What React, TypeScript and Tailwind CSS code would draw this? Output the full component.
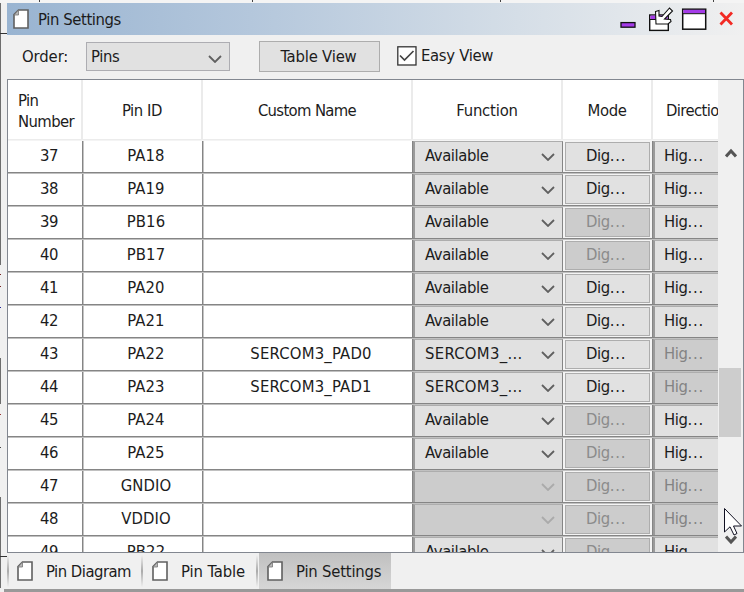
import React from 'react';

type Row = { n: number; id: string; name?: string; fn: string; mode: boolean; dir: boolean };

const rows: Row[] = [
  { n: 37, id: 'PA18', fn: 'Available', mode: true, dir: true },
  { n: 38, id: 'PA19', fn: 'Available', mode: true, dir: true },
  { n: 39, id: 'PB16', fn: 'Available', mode: false, dir: true },
  { n: 40, id: 'PB17', fn: 'Available', mode: false, dir: true },
  { n: 41, id: 'PA20', fn: 'Available', mode: true, dir: true },
  { n: 42, id: 'PA21', fn: 'Available', mode: true, dir: true },
  { n: 43, id: 'PA22', name: 'SERCOM3_PAD0', fn: 'SERCOM3_...', mode: true, dir: false },
  { n: 44, id: 'PA23', name: 'SERCOM3_PAD1', fn: 'SERCOM3_...', mode: true, dir: false },
  { n: 45, id: 'PA24', fn: 'Available', mode: false, dir: true },
  { n: 46, id: 'PA25', fn: 'Available', mode: false, dir: true },
  { n: 47, id: 'GNDIO', fn: '', mode: false, dir: false },
  { n: 48, id: 'VDDIO', fn: '', mode: false, dir: false },
  { n: 49, id: 'PB22', fn: 'Available', mode: false, dir: true },
];

const COLS = 'grid grid-cols-[75px_120px_210px_150px_90px_65px]';

function PageIcon() {
  return (
    <svg width="16" height="20" viewBox="0 0 16 20" className="shrink-0">
      <path d="M5.5 1H15V19H1V5.5Z" fill="#fff" stroke="#606060" strokeWidth="1.6" />
      <path d="M1 6L5.5 1V6Z" fill="#b8b8b8" stroke="#777" strokeWidth="0.8" />
    </svg>
  );
}

function Chevron({ color = '#606060' }: { color?: string }) {
  return (
    <svg width="14" height="8" viewBox="0 0 14 8" className="shrink-0">
      <path d="M1 1L7 7L13 1" fill="none" stroke={color} strokeWidth="1.8" />
    </svg>
  );
}

function TitleBar() {
  return (
    <div className="flex h-8 shrink-0 items-center bg-[linear-gradient(90deg,#99b4d1_0%,#b4c7dc_33%,#d2dce6_66%,#f0f0f0_100%)] pl-[6px]">
      <PageIcon />
      <span className="mt-px ml-[9px] whitespace-nowrap">Pin Settings</span>
      <svg width="124" height="32" viewBox="620 3 124 32" className="ml-auto">
        <rect x="621" y="22.6" width="14" height="4.6" fill="#a43be8" stroke="#111" strokeWidth="1.3" />
        <rect x="649.7" y="15" width="18.6" height="15.4" fill="#fff" stroke="#111" strokeWidth="1.4" />
        <rect x="650.4" y="15.6" width="17.2" height="3.6" fill="#a43be8" />
        <path d="M650 19.5H668" stroke="#111" strokeWidth="1" />
        <path d="M655.5 11.5L659 10.5V16L662 16.5L669.5 8L672.5 11L664.5 19L670.5 19.5L671 21.5L668 24H656Z" fill="#fff" stroke="#111" strokeWidth="1.1" />
        <rect x="682.7" y="9.2" width="23" height="20" fill="#fff" stroke="#111" strokeWidth="1.5" />
        <rect x="683.4" y="9.8" width="21.6" height="3.6" fill="#a43be8" />
        <path d="M683 13.7H705.5" stroke="#111" strokeWidth="1" />
        <path d="M720.5 12.5L732 24.5M732 12.5L720.5 24.5" stroke="#f22a24" strokeWidth="2.8" />
      </svg>
    </div>
  );
}

function Toolbar() {
  return (
    <div className="flex h-11 shrink-0 items-start pl-[15px]">
      <span className="mt-3 w-[64px] leading-5 tracking-[-0.1px]">Order:</span>
      <div className="mt-[7px] flex h-[29px] w-[144px] items-center justify-between border border-[#adadb2] bg-[#e1e1e1] pr-[7px] pl-1">
        <span>Pins</span>
        <span className="mt-[5px] flex"><Chevron /></span>
      </div>
      <div className="mt-[6px] ml-[29px] flex h-[31px] w-[121px] items-center justify-center border border-[#adadad] bg-[#e1e1e1] pr-[2px] tracking-[-0.2px]">
        Table View
      </div>
      <svg width="20" height="20" viewBox="0 0 20 20" className="mt-[11px] ml-[17px]">
        <rect x="0.8" y="0.8" width="18.2" height="18.2" fill="#fff" stroke="#333" strokeWidth="1.3" />
        <path d="M3 9.5L7.5 14L16.5 5" fill="none" stroke="#444" strokeWidth="1.7" />
      </svg>
      <span className="mt-[11px] ml-1 leading-5 tracking-[-0.3px]">Easy View</span>
    </div>
  );
}

function Header() {
  const cell = 'flex items-center justify-center border-r-2 border-[#ebebeb] pt-[2px] whitespace-nowrap';
  return (
    <div className={`${COLS} h-[60px] w-[710px] shrink-0 overflow-hidden border-b border-[#ececec] bg-white`}>
      <div className="flex items-center border-r-2 border-[#ebebeb] pt-[2px] pl-[10px] leading-[21px] tracking-[-0.6px]">Pin<br />Number</div>
      <div className={cell}>Pin ID</div>
      <div className={`${cell} tracking-[-0.65px]`}>Custom Name</div>
      <div className={`${cell} tracking-[-0.2px]`}>Function</div>
      <div className={cell}>Mode</div>
      <div className="flex items-center overflow-hidden pt-[2px] pl-[13px] tracking-[-0.6px] whitespace-nowrap">Direction</div>
    </div>
  );
}

function TableRow({ r, first }: { r: Row; first: boolean }) {
  const plain = 'flex items-center justify-center border-r border-[#858585] border-l border-l-[#c4c4c4] bg-white pb-[2px]';
  return (
    <div className={`${COLS} h-[33px] w-[710px] shrink-0 overflow-hidden border-t border-b border-b-[#858585] ${first ? 'border-t-[#f4f4f4]' : 'border-t-[#c0c0c0]'}`}>
      <div className="flex items-center justify-center border-r border-[#858585] bg-white pb-[2px] pl-2">{r.n}</div>
      <div className={`${plain} pl-[6px] tracking-[0.1px]`}>{r.id}</div>
      <div className={`${plain} pl-[6px] tracking-[0.2px]`}>{r.name}</div>
      <div className={`flex items-center justify-between border-t border-r border-l-2 border-t-[#adadad] border-r-[#858585] border-l-[#9a9a9a] pr-[7px] pb-[2px] pl-[10px] ${r.fn ? 'bg-[#e1e1e1]' : 'bg-[#cccccc]'}`}>
        <span className={r.fn === 'Available' ? '' : 'tracking-[0.3px]'}>{r.fn}</span>
        <span className="mt-[2px] flex"><Chevron color={r.fn ? '#606060' : '#aaaaaa'} /></span>
      </div>
      <div className="flex border-r border-[#858585] bg-[#f4f4f4] pt-px pr-[2px] pb-px pl-[2px]">
        <div className={`flex flex-1 items-center border border-[#adadad] pb-[2px] pl-5 ${r.mode ? 'bg-[#e1e1e1]' : 'bg-[#cccccc] text-[#8b8b8b]'}`}><span>Dig<span className="tracking-[0.8px]">...</span></span></div>
      </div>
      <div className={`flex items-center overflow-hidden border-t border-l-2 border-t-[#adadad] border-l-[#9a9a9a] pb-[2px] pl-[9px] ${r.dir ? 'bg-[#e1e1e1]' : 'bg-[#cccccc] text-[#838383]'}`}><span>Hig<span className="tracking-[0.8px]">...</span></span></div>
    </div>
  );
}

function ScrollBar() {
  return (
    <div className="flex flex-1 flex-col items-center bg-[#f0f0f0]">
      <svg width="12" height="11" viewBox="0 0 12 11" className="mt-[68px] shrink-0">
        <path d="M1 8.5L6 3L11 8.5" fill="none" stroke="#555" strokeWidth="3" />
      </svg>
      <div className="mt-[209px] mr-px h-[69px] w-[22px] shrink-0 bg-[#cdcdcd]" />
      <svg width="12" height="11" viewBox="0 0 12 11" className="mt-[97px] shrink-0">
        <path d="M1 2.5L6 8L11 2.5" fill="none" stroke="#555" strokeWidth="3" />
      </svg>
    </div>
  );
}

function Divider() {
  return <div className="h-8 w-[2px] shrink-0 bg-[linear-gradient(180deg,#f0f0f0,#aaaaaa_50%,#f0f0f0)]" />;
}

function Tabs() {
  return (
    <div className="flex h-9 shrink-0 items-center whitespace-nowrap">
      <Divider />
      <div className="flex w-[132px] items-center pl-2"><PageIcon /><span className="mt-px ml-[13px] tracking-[-0.5px]">Pin Diagram</span></div>
      <Divider />
      <div className="flex w-[113px] items-center pl-[9px]"><PageIcon /><span className="mt-px ml-[13px] tracking-[-0.1px]">Pin Table</span></div>
      <Divider />
      <div className="ml-px flex h-full w-[132px] items-center bg-[linear-gradient(180deg,#c0c0c0,#d6d6d6)] pl-2"><PageIcon /><span className="mt-px ml-[13px] tracking-[-0.2px]">Pin Settings</span></div>
    </div>
  );
}

export default function App() {
  return (
    <div className="relative flex h-[592px] w-[744px] flex-col overflow-hidden bg-[#f0f0f0] font-['DejaVu_Sans_Condensed','DejaVu_Sans',sans-serif] text-[16.5px] leading-5 tracking-[-0.4px] text-[#1c1c1c] [font-stretch:condensed]">
      <div className="flex h-[3px] shrink-0 bg-[#f4f4f4] pl-[39px]">
        <div className="h-[2px] w-px bg-[#444]" />
        <div className="ml-[212px] h-[2px] w-px bg-[#444]" />
        <div className="ml-[247px] h-[2px] w-px bg-[#444]" />
        <div className="ml-[212px] h-[2px] w-px bg-[#444]" />
      </div>
      <div className="flex h-[586px] shrink-0">
        <div className="flex w-[7px] shrink-0 flex-col">
          <div className="h-[30px] w-px bg-[#6d6d6d]" />
          <div className="h-px w-[7px] bg-[#333]" />
          <div className="h-[231px] w-px bg-[#6d6d6d]" />
          <div className="mt-[9px] h-px w-px bg-[#722]" />
          <div className="mt-[11px] h-px w-px bg-[#722]" />
          <div className="mt-[20px] h-px w-px bg-[#229]" />
          <div className="mt-[50px] h-[46px] w-px bg-[#6d6d6d]" />
          <div className="mt-[10px] h-px w-px bg-[#933]" />
          <div className="mt-[32px] h-px w-px bg-[#444]" />
          <div className="mt-[49px] h-[59px] w-px bg-[#6d6d6d]" />
          <div className="h-px w-[7px] bg-[#333]" />
          <div className="h-[31px] w-px bg-[#6d6d6d]" />
        </div>
        <div className="flex min-w-0 flex-1 flex-col">
          <TitleBar />
          <Toolbar />
          <div className="flex h-[474px] shrink-0 overflow-hidden border border-[#828790]">
            <div className="flex w-[710px] shrink-0 flex-col overflow-hidden">
              <Header />
              {rows.map((r, i) => <TableRow key={r.n} r={r} first={i === 0} />)}
            </div>
            <ScrollBar />
          </div>
          <Tabs />
        </div>
      </div>
      <div className="flex h-[3px] shrink-0 pl-1">
        <div className="flex-1 bg-[#999]" />
      </div>
      <svg width="20" height="30" viewBox="0 0 20 30" className="absolute top-[507px] left-[723px]">
        <path d="M1.5 1.5V25L7 19.8L11 28L14 26.5L10.5 19H18.5Z" fill="#fff" stroke="#111122" strokeWidth="1" />
      </svg>
    </div>
  );
}
